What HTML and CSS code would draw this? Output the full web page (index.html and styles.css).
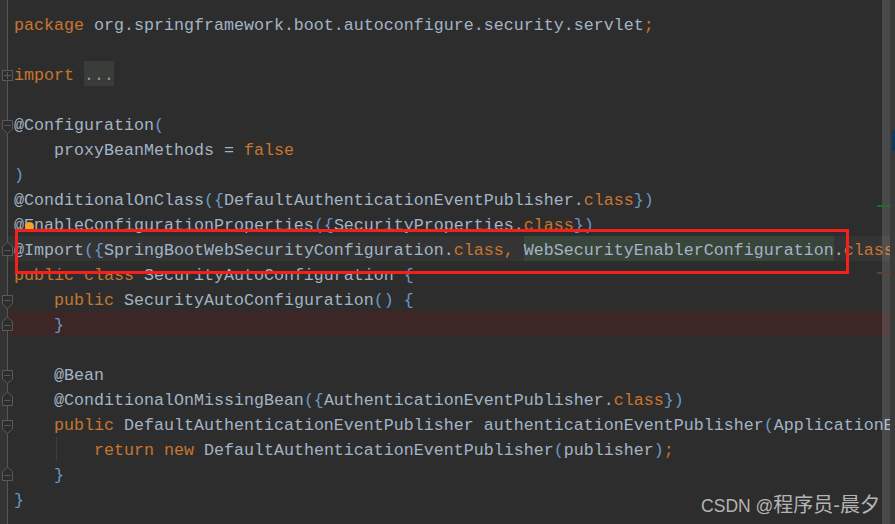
FILE: index.html
```html
<!DOCTYPE html>
<html lang="en">
<head>
<meta charset="utf-8">
<title>SecurityAutoConfiguration</title>
<link rel="stylesheet" href="styles.css">
</head>
<body>
<svg class="defs" width="0" height="0" aria-hidden="true">
  <defs>
    <g id="f-plus"><rect x="2.500" y="9.500" width="10" height="10"/><path d="M4 14.500h7M7.500 11v7"/></g>
    <g id="f-down"><path d="M2.500 9.500h10v8.500l-5 4.500-5-4.500z"/><path d="M4.500 14.500h6"/></g>
    <g id="f-up"><path d="M2.500 19.500v-9l5-4.500 5 4.500v9z"/><path d="M4.500 14.500h6"/></g>
  </defs>
</svg>
<main class="ide">
  <div class="gutter">
    <div class="cell"></div>
    <div class="cell"></div>
    <div class="cell"><svg class="fold" viewBox="0 0 14 25"><use href="#f-plus"/></svg></div>
    <div class="cell"></div>
    <div class="cell"><svg class="fold" viewBox="0 0 14 25"><use href="#f-down"/></svg></div>
    <div class="cell"></div>
    <div class="cell"></div>
    <div class="cell"></div>
    <div class="cell"></div>
    <div class="cell"><svg class="fold" viewBox="0 0 14 25"><use href="#f-up"/></svg></div>
    <div class="cell"></div>
    <div class="cell"><svg class="fold" viewBox="0 0 14 25"><use href="#f-down"/></svg></div>
    <div class="cell"><svg class="fold" viewBox="0 0 14 25"><use href="#f-up"/></svg></div>
    <div class="cell"></div>
    <div class="cell"><svg class="fold" viewBox="0 0 14 25"><use href="#f-down"/></svg></div>
    <div class="cell"><svg class="fold" viewBox="0 0 14 25"><use href="#f-up"/></svg></div>
    <div class="cell"><svg class="fold" viewBox="0 0 14 25"><use href="#f-down"/></svg></div>
    <div class="cell"></div>
    <div class="cell"><svg class="fold" viewBox="0 0 14 25"><use href="#f-up"/></svg></div>
    <div class="cell"></div>
  </div>
  <div class="code">
    <div class="line"><span class="k">package</span> org.springframework.boot.autoconfigure.security.servlet<span class="k">;</span></div>
    <div class="line"></div>
    <div class="line"><span class="k">import</span> <span class="folded">...</span></div>
    <div class="line"></div>
    <div class="line">@Configuration<span class="b">(</span></div>
    <div class="line">    proxyBeanMethods = <span class="k">false</span></div>
    <div class="line"><span class="b">)</span></div>
    <div class="line">@ConditionalOnClass<span class="b">({</span>DefaultAuthenticationEventPublisher.<span class="k">class</span><span class="b">})</span></div>
    <div class="line has-bulb">@EnableConfigurationProperties<span class="b">({</span>SecurityProperties.<span class="k">class</span><span class="b">})</span><span class="bulb"></span></div>
    <div class="line current">@Import<span class="b">({</span>SpringBootWebSecurityConfiguration.<span class="k">class</span><span class="k">,</span> <span class="match">WebSecurityEnablerConfiguration</span>.<span class="k">class</span></div>
    <div class="line"><span class="k">public class</span> SecurityAutoConfiguration <span class="b">{</span></div>
    <div class="line">    <span class="k">public</span> SecurityAutoConfiguration<span class="b">()</span> <span class="b">{</span></div>
    <div class="line breakpoint">    <span class="b">}</span></div>
    <div class="line"></div>
    <div class="line">    @Bean</div>
    <div class="line">    @ConditionalOnMissingBean<span class="b">({</span>AuthenticationEventPublisher.<span class="k">class</span><span class="b">})</span></div>
    <div class="line">    <span class="k">public</span> DefaultAuthenticationEventPublisher authenticationEventPublisher<span class="b">(</span>ApplicationEventPublisher publisher<span class="b">)</span></div>
    <div class="line has-guide"><span class="guide"></span>        <span class="k">return new</span> DefaultAuthenticationEventPublisher<span class="b">(</span>publisher<span class="b">)</span><span class="k">;</span></div>
    <div class="line">    <span class="b">}</span></div>
    <div class="line"><span class="b">}</span></div>
  </div>
  <div class="stripe">
    <span class="mark-blue"></span>
  </div>
  <div class="scroll-thumb"></div>
  <div class="tick tick-green"></div>
  <div class="tick tick-brown"></div>
  <div class="callout"></div>
  <div class="watermark">CSDN @<span class="wm-cjk">程序员-晨夕</span></div>
</main>
</body>
</html>
```

FILE: styles.css
```css
* { box-sizing: border-box; }

html, body {
  margin: 0;
  height: 100%;
  overflow: hidden;
  background: #2d2d2d;
}

.defs { position: absolute; }

.ide {
  position: relative;
  display: flex;
  width: 895px;
  height: 524px;
  overflow: hidden;
  background: #2d2d2d;
  font-family: "Liberation Mono", "Courier New", monospace;
  font-size: 16.67px;
  color: #a3b4c5;
}

/* fold gutter */
.gutter {
  position: relative;
  z-index: 1;
  flex: 0 0 8px;
  width: 8px;
  min-width: 0;
  padding-top: 11px;
  background: #343434;
  border-right: 1px solid #555;
}

.cell { height: 25px; }

.fold {
  display: block;
  width: 14px;
  height: 25px;
  overflow: visible;
  fill: #2d2d2d;
  stroke: #5a5a5a;
  stroke-width: 1;
}

/* code */
.code {
  flex: 0 0 882px;
  padding-top: 11px;
  overflow: hidden;
}

.line {
  position: relative;
  height: 25px;
  padding-left: 6px;
  line-height: 29px;
  white-space: pre;
}

.k { color: #c8752f; }
.b { color: #6a97c4; }

.folded {
  display: inline-block;
  vertical-align: top;
  height: 25px;
  background: #3a3c3a;
  color: #8d9a9a;
}

.current { background: #343434; }

.match {
  display: inline-block;
  vertical-align: top;
  height: 25px;
  background: #39443a;
}

.breakpoint { background: #3c2626; }

.bulb {
  position: absolute;
  left: 17px;
  top: 11px;
  width: 9px;
  height: 9px;
  border-radius: 50%;
  background: #f0a52c;
}

.guide {
  position: absolute;
  left: 48px;
  top: 1px;
  width: 1px;
  height: 24px;
  background: #3e3e3e;
}

/* right side */
.stripe {
  flex: 0 0 5px;
  position: relative;
  background: #3a3a3a;
}

.mark-blue {
  position: absolute;
  left: 2px;
  top: 130px;
  width: 3px;
  height: 21px;
  background: #0f3a5f;
}

.scroll-thumb {
  position: absolute;
  left: 882px;
  top: 0;
  width: 8px;
  height: 524px;
  background: rgba(255, 255, 255, 0.14);
}

.tick {
  position: absolute;
  left: 877px;
  width: 14px;
  height: 2px;
}
.tick-green { top: 205px; background: #1f6b2a; }
.tick-brown { top: 272px; background: #5a4238; }

.callout {
  position: absolute;
  z-index: 2;
  left: 15px;
  top: 229px;
  width: 834px;
  height: 45px;
  border: 3px solid #f3201c;
}

.watermark {
  position: absolute;
  z-index: 3;
  right: 15px;
  top: 494px;
  font-family: "Liberation Sans", "Noto Sans CJK SC", sans-serif;
  font-size: 17.5px;
  line-height: 22px;
  white-space: nowrap;
  color: #b4b4b4;
}

.wm-cjk { font-size: 20px; }
```
